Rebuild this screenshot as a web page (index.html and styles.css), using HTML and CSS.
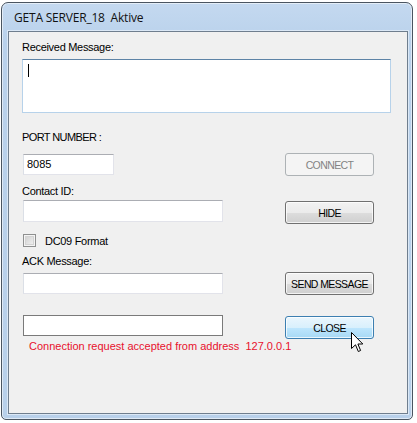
FILE: index.html
```html
<!DOCTYPE html>
<html lang="en">

<head>
    <meta charset="UTF-8">
    <meta name="viewport" content="width=device-width, initial-scale=1.0">
    <title>GETA SERVER_18 Aktive</title>
    <link rel="stylesheet" href="styles.css">
</head>

<body>
    <div class="window">
        <div class="titlebar">GETA SERVER_18&nbsp; Aktive</div>
        <div class="client">
            <label class="label">Received Message:</label>
            <div class="memo"><span class="caret"></span></div>

            <label class="label caps port-label">PORT NUMBER :</label>
            <div class="row row-port">
                <div class="textbox short">8085</div>
                <button class="btn disabled">CONNECT</button>
            </div>

            <label class="label contact-label">Contact ID:</label>
            <div class="row row-contact">
                <div class="textbox"></div>
                <button class="btn low">HIDE</button>
            </div>

            <div class="check-row">
                <span class="checkbox"></span>
                <span class="check-text">DC09 Format</span>
            </div>

            <label class="label ack-label">ACK Message:</label>
            <div class="row row-ack">
                <div class="textbox"></div>
                <button class="btn">SEND MESSAGE</button>
            </div>

            <div class="row row-close">
                <div class="textbox plain"></div>
                <button class="btn hot low">CLOSE</button>
            </div>
            <div class="status">Connection request accepted from address&nbsp; 127.0.0.1</div>

            <!-- mouse pointer over the close button -->
            <svg class="pointer" width="13" height="21" viewBox="0 0 13 21">
                <path d="M0.5 0.5 L0.5 16.5 L4.5 12.8 L7.3 19.5 L9.6 18.5 L6.9 12 L11.8 12 Z" fill="#fff" stroke="#000" stroke-width="1" stroke-linejoin="miter" />
            </svg>
        </div>
    </div>
</body>

</html>
```

FILE: styles.css
```css
body {
    margin: 0;
    background: #ffffff;
    font-family: 'Liberation Sans', Arial, sans-serif;
    font-size: 11px;
    color: #000;
}

.window {
    box-sizing: border-box;
    margin: 2px 0 0 1px;
    width: 412px;
    height: 418px;
    border: 1px solid #4a5561;
    border-radius: 7px 7px 5px 5px;
    background: linear-gradient(#c4d9f0, #b9d1eb 40px, #b8d0ea);
    box-shadow: inset 0 0 0 1px rgba(255, 255, 255, 0.55);
    padding: 0 4px 5px 6px;
    display: flex;
    flex-direction: column;
}

.titlebar {
    height: 28px;
    display: flex;
    align-items: center;
    padding-left: 6px;
    font-family: 'Open Sans', 'Noto Sans', sans-serif;
    font-size: 12px;
    color: #111;
    letter-spacing: -0.2px;
}

.client {
    position: relative;
    flex: 1;
    box-sizing: border-box;
    border: 1px solid #6f7e8e;
    background: #f0f0f0;
    padding: 9px 16px 0 13px;
    display: flex;
    flex-direction: column;
    box-shadow: 0 0 0 1px #dbe8f6;
}

.label {
    display: block;
    line-height: 13px;
    height: 13px;
    letter-spacing: -0.3px;
}

.caps {
    letter-spacing: -0.6px;
}

.memo {
    box-sizing: border-box;
    margin-top: 5px;
    height: 54px;
    background: #fff;
    border: 1px solid #b7d2ea;
    border-top-color: #5d83a6;
    padding: 4px 5px;
}

.caret {
    display: block;
    width: 1px;
    height: 13px;
    background: #000;
}

.port-label {
    margin-top: 18px;
}

.contact-label {
    margin-top: 9px;
}

.ack-label {
    margin-top: 8px;
}

.row {
    display: flex;
    align-items: flex-start;
    padding-right: 17px;
    height: 23px;
}

.row-port {
    margin-top: 9px;
    align-items: center;
}

.row-contact {
    margin-top: 2px;
}

.row-ack {
    margin-top: 4px;
    align-items: center;
}

.row-close {
    margin-top: 20px;
    height: 24px;
}

.textbox {
    box-sizing: border-box;
    margin-left: 1px;
    width: 200px;
    height: 21px;
    background: #fff;
    border: 1px solid #e2e3ea;
    border-top-color: #abadb3;
    border-left-color: #dbdfe6;
    padding: 3px 3px;
    line-height: 13px;
}

.row-contact .textbox {
    height: 22px;
}

.textbox.short {
    width: 91px;
}

.textbox.plain {
    border: 1px solid #7a7a7a;
}

.btn {
    box-sizing: border-box;
    margin-left: auto;
    width: 89px;
    height: 23px;
    padding: 0;
    font-family: inherit;
    font-size: 10.5px;
    letter-spacing: -0.6px;
    color: #000;
    border: 1px solid #707070;
    border-radius: 3px;
    background: linear-gradient(#f2f2f2, #ebebeb 50%, #dddddd 51%, #cfcfcf);
    box-shadow: inset 0 0 0 1px rgba(255, 255, 255, 0.75);
}

.btn.low {
    margin-top: 1px;
}

.btn.disabled {
    color: #838383;
    border-color: #adb2b5;
    background: #f4f4f4;
    box-shadow: none;
}

.btn.hot {
    border-color: #3c7fb1;
    background: linear-gradient(#eaf6fd, #d9f0fc 50%, #bee6fd 51%, #a7d9f5);
}

.check-row {
    margin-top: 11px;
    display: flex;
    align-items: center;
    height: 13px;
    padding-left: 1px;
}

.checkbox {
    box-sizing: border-box;
    width: 13px;
    height: 13px;
    border: 1px solid #8e8f8f;
    background: linear-gradient(135deg, #cbcbcb, #f6f6f6);
    box-shadow: inset 0 0 0 1px #f4f4f4, inset 0 0 0 2px #d3d3d3;
}

.check-text {
    margin-left: 9px;
    letter-spacing: -0.3px;
}

.status {
    margin: 1px 0 0 7px;
    line-height: 13px;
    color: #e8112d;
    white-space: nowrap;
}

.pointer {
    position: absolute;
    left: 342px;
    top: 300px;
}
```
